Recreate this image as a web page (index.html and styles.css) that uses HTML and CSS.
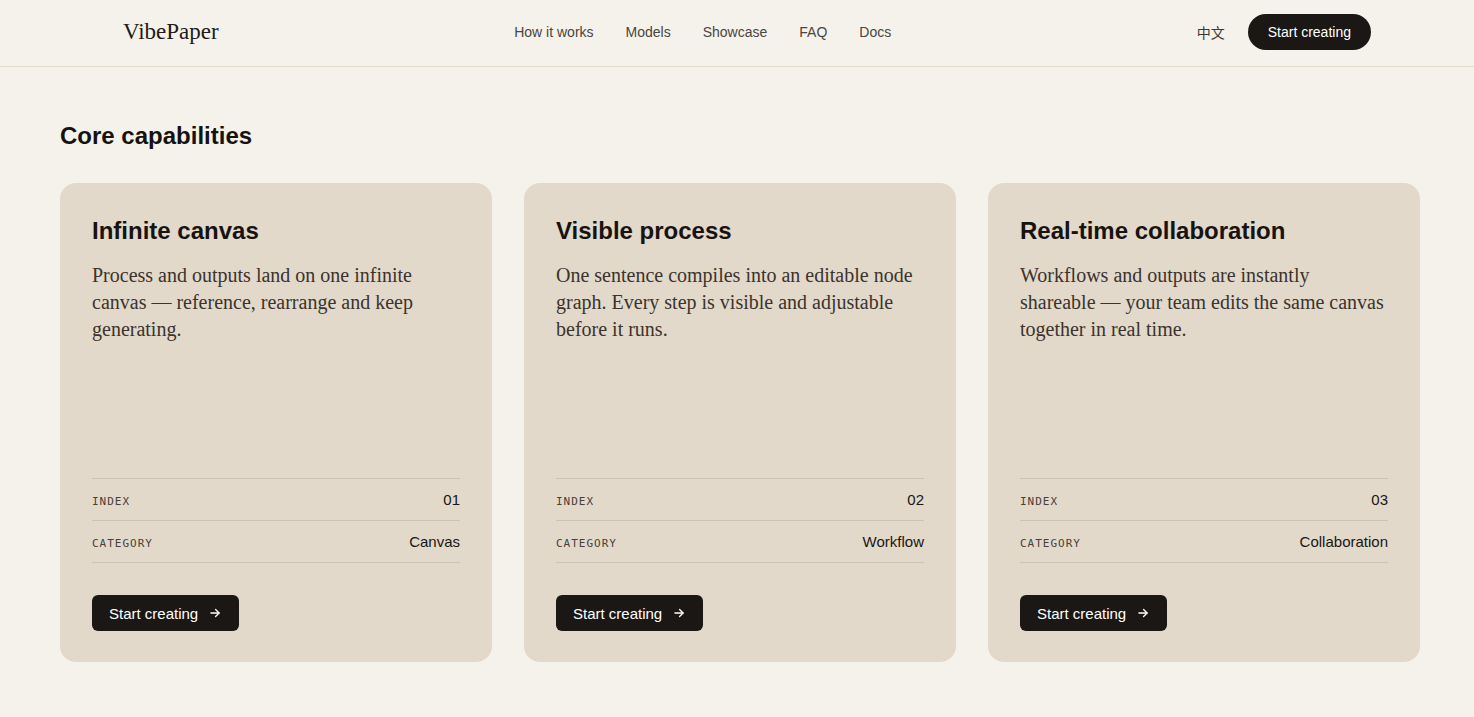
FILE: index.html
```html
<!DOCTYPE html>
<html lang="en">
<head>
    <meta charset="UTF-8">
    <meta name="viewport" content="width=device-width, initial-scale=1.0">
    <title>VibePaper</title>
    <link rel="stylesheet" href="styles.css">
</head>
<body>
    <header class="topbar">
        <a class="logo" href="#">VibePaper</a>
        <nav class="nav">
            <a href="#">How it works</a>
            <a href="#">Models</a>
            <a href="#">Showcase</a>
            <a href="#">FAQ</a>
            <a href="#">Docs</a>
        </nav>
        <div class="top-actions">
            <a class="lang" href="#">中文</a>
            <a class="pill" href="#">Start creating</a>
        </div>
    </header>

    <main class="section">
        <h2 class="section-title">Core capabilities</h2>
        <div class="cards">
            <div class="card">
                <h3>Infinite canvas</h3>
                <p>Process and outputs land on one infinite canvas — reference, rearrange and keep generating.</p>
                <div class="meta">
                    <div class="meta-row"><span class="label">Index</span><span class="value">01</span></div>
                    <div class="meta-row"><span class="label">Category</span><span class="value">Canvas</span></div>
                </div>
                <a class="btn" href="#">Start creating
                    <svg width="14" height="14" viewBox="0 0 24 24" fill="none" stroke="currentColor" stroke-width="2.2" stroke-linecap="round" stroke-linejoin="round"><path d="M5 12h14"/><path d="M13 6l6 6-6 6"/></svg>
                </a>
            </div>
            <div class="card">
                <h3>Visible process</h3>
                <p>One sentence compiles into an editable node graph. Every step is visible and adjustable before it runs.</p>
                <div class="meta">
                    <div class="meta-row"><span class="label">Index</span><span class="value">02</span></div>
                    <div class="meta-row"><span class="label">Category</span><span class="value">Workflow</span></div>
                </div>
                <a class="btn" href="#">Start creating
                    <svg width="14" height="14" viewBox="0 0 24 24" fill="none" stroke="currentColor" stroke-width="2.2" stroke-linecap="round" stroke-linejoin="round"><path d="M5 12h14"/><path d="M13 6l6 6-6 6"/></svg>
                </a>
            </div>
            <div class="card">
                <h3>Real-time collaboration</h3>
                <p>Workflows and outputs are instantly shareable — your team edits the same canvas together in real time.</p>
                <div class="meta">
                    <div class="meta-row"><span class="label">Index</span><span class="value">03</span></div>
                    <div class="meta-row"><span class="label">Category</span><span class="value">Collaboration</span></div>
                </div>
                <a class="btn" href="#">Start creating
                    <svg width="14" height="14" viewBox="0 0 24 24" fill="none" stroke="currentColor" stroke-width="2.2" stroke-linecap="round" stroke-linejoin="round"><path d="M5 12h14"/><path d="M13 6l6 6-6 6"/></svg>
                </a>
            </div>
        </div>
    </main>
</body>
</html>
```

FILE: styles.css
```css
body { margin: 0; background: #f5f2eb; color: #1a1613; font-family: "Liberation Sans", Arial, sans-serif; }
a { text-decoration: none; color: inherit; }

.topbar { height: 64px; padding: 0 103px 2px 123px; border-bottom: 1px solid #e2dccf; display: flex; align-items: center; justify-content: space-between; }
.logo { font-family: "Liberation Serif", Georgia, serif; font-size: 23px; color: #1f1b17; }
.nav { display: flex; gap: 32px; margin-right: 10px; font-size: 14px; color: #4a4540; }
.top-actions { display: flex; align-items: center; gap: 23px; font-size: 14px; }
.lang { color: #3d3833; font-family: "Liberation Sans", "Noto Sans CJK SC", sans-serif; }
.pill { background: #1a1714; color: #fff; height: 36px; padding: 0 20px; border-radius: 18px; display: flex; align-items: center; }

.section { padding: 53px 54px 0 60px; }
.section-title { margin: 0 0 31px; font-size: 24px; line-height: 32px; font-weight: bold; color: #15120f; }

.cards { display: grid; grid-template-columns: repeat(3, 432px); gap: 32px; }
.card { background: #e2d9cb; border-radius: 16px; height: 479px; box-sizing: border-box; padding: 32px 32px 31px; display: flex; flex-direction: column; }
.card h3 { margin: 0; font-size: 24px; line-height: 32px; font-weight: bold; color: #17130f; }
.card p { margin: 15px 0 0; font-family: "Liberation Serif", Georgia, serif; font-size: 20px; line-height: 27px; color: #3b332c; }

.meta { margin-top: auto; border-top: 1px solid #cdc3b4; }
.meta-row { height: 42px; box-sizing: border-box; display: flex; justify-content: space-between; align-items: baseline; padding-top: 12px; line-height: 17px; border-bottom: 1px solid #cdc3b4; }
.label { font-family: "DejaVu Sans Mono", monospace; font-size: 11px; letter-spacing: 1px; text-transform: uppercase; color: #4a4038; }
.value { font-size: 15px; color: #1a1613; }

.btn { margin-top: 32px; align-self: flex-start; background: #1a1714; color: #fff; height: 36px; padding: 0 17px; border-radius: 6px; display: flex; align-items: center; gap: 10px; font-size: 15px; }
```
